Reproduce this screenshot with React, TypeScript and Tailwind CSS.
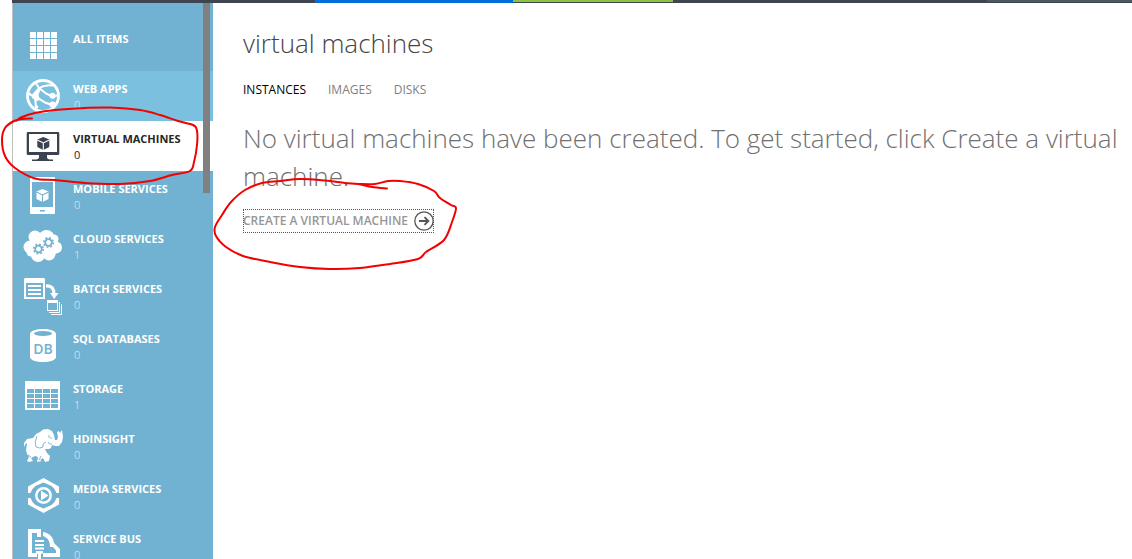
import type { ReactNode } from "react";

const BLUE = "#71b1d1";

function Cube({ x, y, edge }: { x: number; y: number; edge: string }) {
  return (
    <g transform={`translate(${x} ${y})`}>
      <path d="M0-6.500 6-4v7.500L0 6.500l-6-3v-7.500z" fill="currentColor" />
      <path d="M-6-3.500 0-.6l6-2.900M0-.6V6.500" fill="none" stroke={edge} strokeWidth="1.1" />
    </g>
  );
}

function Gear({ x, y }: { x: number; y: number }) {
  return (
    <g transform={`translate(${x} ${y})`} fill="none" stroke={BLUE}>
      <circle r="3.3" strokeWidth="1.8" />
      <circle r="4.8" strokeWidth="1.6" strokeDasharray="1.9 1.87" />
    </g>
  );
}

const icons: Record<string, ReactNode> = {
  all: (
    <g fill="currentColor">
      {[7, 14, 21, 28].map((y) =>
        [7, 14, 21, 28].map((x) => <rect key={`${x}-${y}`} x={x} y={y} width="6" height="6" />)
      )}
    </g>
  ),
  web: (
    <g fill="none" stroke="currentColor">
      <circle cx="20" cy="21" r="15.5" strokeWidth="2.8" />
      <path d="M12.500 7.500L16 13L12 21L13 33M16 13Q22 9.500 30 10.500M16 13L23 18.500L29 21.500Q33 22 34 20M12 21Q8 21 5.500 18M12 21L22 27.500L29 30" strokeWidth="2" />
      <g fill="currentColor" stroke="none">
        <path d="M14.500 13.500L17.500 14.500L15.500 20L17 25L14 26L9 23L9.500 19z" />
        <circle cx="29.500" cy="20.800" r="3" />
        <circle cx="29.500" cy="29.500" r="3" />
        <circle cx="13.500" cy="32" r="1.800" />
      </g>
    </g>
  ),
  vm: (
    <g>
      <path fill="currentColor" fillRule="evenodd" d="M5 7h30q1.300 0 1.300 1.300v20.400q0 1.300-1.300 1.300H5q-1.300 0-1.300-1.300V8.300Q3.700 7 5 7zM6 9v18h28V9z" />
      <path fill="currentColor" d="M16 30h8v2q0 2 3 2.500h3V36H9v-1.500h4q3-.5 3-2.500z" />
      <Cube x={20.3} y={18.5} edge="#ffffff" />
    </g>
  ),
  mobile: (
    <g>
      <path fill="currentColor" fillRule="evenodd" d="M8 2h23q1 0 1 1v35q0 1-1 1H8q-1 0-1-1V3q0-1 1-1zM9 7v25h21V7zM17 35v1.500h5V35z" />
      <Cube x={19.5} y={20.5} edge={BLUE} />
    </g>
  ),
  cloud: (
    <g>
      <g fill="currentColor">
        <circle cx="12" cy="12" r="6.500" />
        <circle cx="23.500" cy="13" r="8" />
        <circle cx="31" cy="14" r="4.500" />
        <circle cx="7" cy="22" r="6.500" />
        <circle cx="33" cy="22.500" r="6" />
        <circle cx="15" cy="30" r="7" />
        <circle cx="26" cy="29" r="6.500" />
        <circle cx="8" cy="27" r="4.500" />
        <rect x="7" y="14" width="26" height="15" />
      </g>
      <Gear x={15.5} y={24} />
      <Gear x={25.5} y={17.5} />
    </g>
  ),
  batch: (
    <g>
      <path fill="currentColor" fillRule="evenodd" d="M2 3h19l1 1v20H1V4zM3 8v14h17V8z" />
      <path fill="currentColor" d="M5 10h13v2H5zM5 14h13v2H5zM5 18h13v2H5zM27 18h8.500L31.200 24z" />
      <path d="M23 10.800Q31 10.500 31 19" fill="none" stroke="currentColor" strokeWidth="3.200" />
      <path fill="currentColor" fillRule="evenodd" d="M24 25h11v11H24zM25 28v7h9v-7z" />
      <path d="M26 37.500h10.500V27M28 39.500h10.500V29" fill="none" stroke="currentColor" />
    </g>
  ),
  sql: (
    <g>
      <path fill="currentColor" d="M7 9c0-3 6-5 13-5s13 2 13 5v23c0 3-6 5-13 5S7 35 7 32z" />
      <ellipse cx="20" cy="8.500" rx="9" ry="2.600" fill={BLUE} />
      <text x="20" y="28.500" textAnchor="middle" fill={BLUE} fontSize="14" fontWeight="600" fontFamily="Open Sans, sans-serif">
        DB
      </text>
    </g>
  ),
  storage: (
    <g>
      <rect x="2" y="6" width="35" height="29" rx="1" fill="currentColor" />
      {[14, 19, 24, 29].map((y) =>
        [4, 12, 20, 28].map((x) => <rect key={`${x}-${y}`} x={x} y={y} width="7" height="4" fill={BLUE} />)
      )}
    </g>
  ),
  hdinsight: (
    <g>
      <path
        fill="currentColor"
        d="M1 22L1 18L4 14L10 13L13 9L17 7L20 4.500L25 4L29 6L31 10L32 15L34 15L35 12L34 7L36 6L37 8L39 5L40 12L39 17L36 21L32 21L29 20L28 23L26 24L22 24L24 28L27 31L26 36L22 37L20 33L17 35L19 36L14 37L15 32L12 31L8 33L10 36L6 37L4 36L6 32L4 29L3 25L4 19L3 18z"
      />
      <path
        fill="none"
        stroke={BLUE}
        strokeWidth="0.900"
        d="M14 11Q11 17 13 22Q17 24 20 22L20 19L23 17M26 10v3M28 12v2M25 17Q26 20 29 19M18 31l-2 4M5 30l3 2"
      />
    </g>
  ),
  media: (
    <g fill="currentColor">
      <path d="M20.500 3L36 11.500V18h-2.500Q32 13.500 28.500 11L20.500 7.500L12.500 11Q9 13.500 7.500 18H5V11.500zM20.500 38L36 29.500V23h-2.500Q32 27.500 28.500 30L20.500 33.500L12.500 30Q9 27.500 7.500 23H5v6.500z" />
      <circle cx="20.500" cy="20.500" r="7.200" fill="none" stroke="currentColor" strokeWidth="2.600" />
      <path d="M18 15.500v10l7.500-5z" />
    </g>
  ),
  bus: (
    <g>
      <path fill="currentColor" d="M5 4h13v4H9v20h5v4H5zM12 15h9v2h-9zM12 19h9v2h-9zM12 22.500h9v2h-9zM13 26h7v2l-2 1v7h-3v-7l-2-1zM14 8h4v4h-4z" />
      <path fill="currentColor" d="M20 7C27 8 30.500 13 31 18L37 24V32H20V28H33V25.500L30 22H27C27 16 25 13 20 11z" />
    </g>
  ),
};

const services = [
  { icon: "web", label: "WEB APPS", count: 0, row: "bg-[#7bc0de] text-white" },
  { icon: "vm", label: "VIRTUAL MACHINES", count: 0, row: "bg-white text-[#3b4250]", current: true },
  { icon: "mobile", label: "MOBILE SERVICES", count: 0 },
  { icon: "cloud", label: "CLOUD SERVICES", count: 1 },
  { icon: "batch", label: "BATCH SERVICES", count: 0 },
  { icon: "sql", label: "SQL DATABASES", count: 0 },
  { icon: "storage", label: "STORAGE", count: 1 },
  { icon: "hdinsight", label: "HDINSIGHT", count: 0 },
  { icon: "media", label: "MEDIA SERVICES", count: 0 },
  { icon: "bus", label: "SERVICE BUS", count: 0 },
];

function NavItem({ icon, label, count, row = "text-white", current = false }: {
  icon: string;
  label: string;
  count?: number;
  row?: string;
  current?: boolean;
}) {
  return (
    <li>
      <a href="#" aria-current={current ? "page" : undefined} className={`flex h-[50px] gap-[10px] pt-1 pl-[10px] ${row}`}>
        <svg viewBox="0 0 40 40" className="size-10 shrink-0" aria-hidden="true">
          {icons[icon]}
        </svg>
        <span className="flex flex-col pt-1.5 whitespace-nowrap">
          <span className={`text-[11px] leading-4 font-bold ${current ? "text-[#262626]" : ""}`}>{label}</span>
          {count !== undefined && (
            <span className={`pl-px text-[11px] leading-4 ${current ? "text-[#262626]" : "font-light text-white/80"}`}>{count}</span>
          )}
        </span>
      </a>
    </li>
  );
}

type Point = [number, number];

// Smooth curve running through every point (Catmull-Rom as cubic segments).
function smooth(points: Point[]) {
  let d = `M${points[0][0]} ${points[0][1]}`;
  for (let i = 0; i < points.length - 1; i++) {
    const p0 = points[Math.max(i - 1, 0)];
    const p1 = points[i];
    const p2 = points[i + 1];
    const p3 = points[Math.min(i + 2, points.length - 1)];
    d += `C${p1[0] + (p2[0] - p0[0]) / 6} ${p1[1] + (p2[1] - p0[1]) / 6} ${p2[0] - (p3[0] - p1[0]) / 6} ${p2[1] - (p3[1] - p1[1]) / 6} ${p2[0]} ${p2[1]}`;
  }
  return d;
}

const navMark: Point[] = [
  [32, 118.5], [22, 119], [14, 121], [5, 128], [2, 140], [5, 156], [15, 168], [35, 178.5], [55, 180],
  [85, 183], [120, 184], [150, 181], [172, 175], [190, 171], [194, 162], [197, 145], [197, 131], [193, 125],
  [178, 121], [160, 115], [140, 110], [110, 107.5], [85, 108], [55, 110], [35, 113], [22, 117], [16, 121],
];

const createMark: Point[] = [
  [387, 188.5], [372, 187], [358, 184], [345, 183], [325, 180.5], [300, 179], [280, 181], [262, 183], [245, 190],
  [231, 202], [222, 215], [215, 227], [216, 236], [226, 247], [243, 256], [270, 262], [300, 267], [330, 269],
  [360, 268], [390, 264], [418, 259], [426, 252], [444, 240], [452, 222], [456, 208], [451, 205], [440, 198],
  [434, 191], [418, 184], [400, 181], [388, 181], [375, 184], [358, 184],
];

export default function App() {
  return (
    <div className="relative flex h-screen flex-col overflow-hidden bg-white pl-3 font-['Open_Sans',sans-serif]">
      <header className="flex h-[3px] shrink-0 bg-[#3e4551]">
        <div className="w-[303px] shrink-0" />
        <div className="w-[198px] shrink-0 bg-[#006dd9]" />
        <div className="h-0.5 w-40 shrink-0 bg-[#8cc63f]" />
        <div className="flex-1" />
        <div className="h-0.5 w-[145px] shrink-0 bg-[#4b5863]" />
      </header>
      <div className="flex min-h-0 flex-1">
        <nav aria-label="Services" className="relative w-[201px] shrink-0 overflow-hidden border-l border-[#c0c0c0] bg-[#71b1d1]">
          <ul className="pt-[18px]">
            <NavItem icon="all" label="ALL ITEMS" />
            {services.map((s) => (
              <NavItem key={s.label} {...s} />
            ))}
          </ul>
          <div className="absolute top-0 right-[3px] h-[190px] w-[7px] bg-[#808080]" />
        </nav>
        <main className="min-w-0 flex-1 pt-5 pl-[30px]">
          <h1 className="text-[26px] leading-10 font-light text-[#444444]">virtual machines</h1>
          <div role="tablist" className="mt-4 flex gap-[22px] text-[12px] leading-[22px]">
            <button role="tab" aria-selected="true" className="text-black">INSTANCES</button>
            <button role="tab" aria-selected="false" className="text-[#808080]">IMAGES</button>
            <button role="tab" aria-selected="false" className="text-[#808080]">DISKS</button>
          </div>
          <p className="mt-[18px] text-[26px] leading-[38px] font-light text-[#707070]">
            No virtual machines have been created. To get started, click Create a virtual machine.
          </p>
          <button className="mt-[14px] flex h-6 items-center gap-1.5 text-[12px] font-semibold text-[#969696] outline-1 -outline-offset-1 outline-dotted outline-[#555555]">
            CREATE A VIRTUAL MACHINE
            <svg viewBox="0 0 20 20" className="size-5" fill="none" stroke="#555555" aria-hidden="true">
              <circle cx="10" cy="10" r="9.200" strokeWidth="1.300" />
              <path d="M5 10h9M10.500 6.200l3.800 3.800-3.800 3.800" strokeWidth="1.900" />
            </svg>
          </button>
        </main>
      </div>
      <svg className="pointer-events-none absolute top-0 left-0 h-[280px] w-[470px]" viewBox="0 0 470 280" fill="none" stroke="#f40000" strokeWidth="2" strokeLinecap="round" aria-hidden="true">
        <path d={smooth(navMark)} />
        <path d={smooth(createMark)} />
      </svg>
    </div>
  );
}
